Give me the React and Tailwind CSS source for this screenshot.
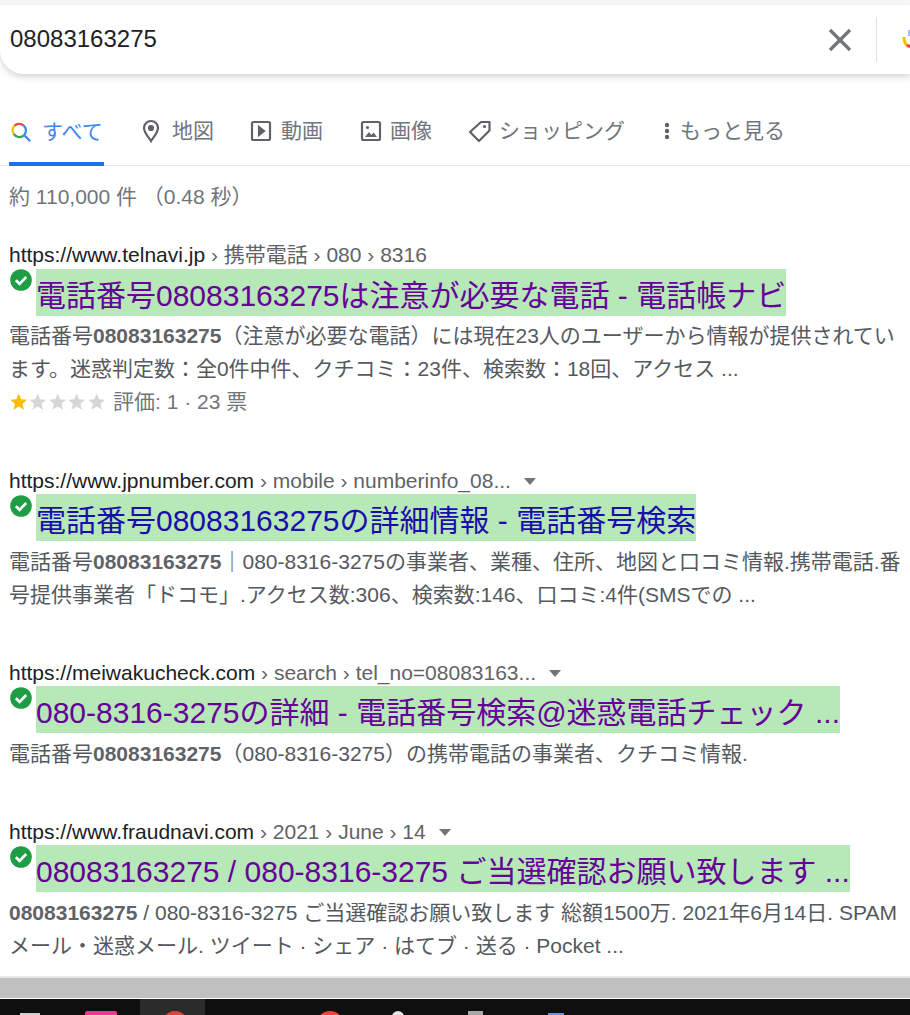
const JP = "font-['Liberation_Sans','Noto_Sans_CJK_JP',sans-serif]";

function Check() {
  return (
    <svg width="22" height="22" viewBox="0 0 22 22" className="shrink-0 mt-[2px] ml-[1px]">
      <circle cx="11" cy="11" r="10.800" fill="#1f9d45" />
      <path d="M5.800 11.200l3.800 3.600 6.600-6.800" fill="none" stroke="#fff" strokeWidth="2.600" />
    </svg>
  );
}

function Star({ color }) {
  return (
    <svg width="19.500" height="19" viewBox="0 0 24 24">
      <path d="M12 2l3 7.200 7.600.6-5.800 5 1.800 7.500L12 18.200 5.400 22.300l1.800-7.500-5.800-5L9 9.200z" fill={color} />
    </svg>
  );
}

function Result({ url, crumbs, caret, title, titleColor, titleTop = "mt-[1px]", wrapperClass, children }) {
  return (
    <div className={wrapperClass}>
      <div className="flex items-center h-[24px] text-[21px] leading-[24px] whitespace-nowrap">
        <span className="text-[#202124]">{url}</span>
        <span className="text-[#5f6368]">&nbsp;› {crumbs}</span>
        {caret && <span className="ml-[13px] mt-[1px] w-0 h-0 border-x-[6px] border-x-transparent border-t-[7px] border-t-[#70757a]" />}
      </div>
      <div className="flex items-start h-[47px]">
        <Check />
        <span className={`ml-[4px] h-[47px] bg-[#b7e8b7] text-[30px] leading-[54px] whitespace-nowrap ${titleTop} ${titleColor}`}>{title}</span>
      </div>
      <div className="text-[21px] leading-[33px] mt-[5px] text-[#55595e] whitespace-nowrap">{children}</div>
    </div>
  );
}

function Bold({ children }) {
  return <b className="font-bold text-[#5f6368]">{children}</b>;
}

export default function App() {
  const iconClass = "text-[#5f6368]";
  return (
    <div className={`w-[910px] h-[1015px] overflow-hidden bg-white flex flex-col ${JP}`}>
      <div className="h-[5px] bg-[#f7f7f7]" />
      <div className="h-[69px] bg-white rounded-bl-[24px] shadow-[0_3px_6px_rgba(60,64,67,0.22)] flex items-center relative z-10">
        <span className="ml-[10px] mb-[2px] text-[24px] text-[#202124]">08083163275</span>
        <svg width="24" height="24" viewBox="0 0 24 24" className="ml-auto mr-[24px]">
          <path d="M2 2l20 20M22 2L2 22" stroke="#70757a" strokeWidth="3.200" fill="none" />
        </svg>
        <div className="w-px h-[45px] bg-[#dfe1e5] mr-[25px]" />
        <svg width="8" height="24" viewBox="0 0 8 24">
          <path d="M2 9c0 5 2 9 6 9" fill="none" stroke="#fbbc04" strokeWidth="3" />
          <path d="M5 17.500c1 .5 2 .8 3 .8" fill="none" stroke="#ea4335" strokeWidth="3" />
          <path d="M7 2v6" stroke="#9ec5f8" strokeWidth="2" />
        </svg>
      </div>

      <div className="h-[91px] mt-[1px] pl-[9px] flex border-b border-[#e6e8ec] text-[21px] whitespace-nowrap">
        <div className="relative h-[91px] w-[95px] shrink-0 flex items-center text-[#4285f4] pt-[22px]">
          <svg width="22" height="24" viewBox="0 0 24 24" className="mr-[10px] ml-[1px] shrink-0">
            <path d="M15.500 15.500A7.500 7.500 0 0 1 4 14" fill="none" stroke="#34a853" strokeWidth="2.500" />
            <path d="M4 14A7.500 7.500 0 0 1 5 5" fill="none" stroke="#fbbc04" strokeWidth="2.500" />
            <path d="M5 5a7.500 7.500 0 0 1 10 0" fill="none" stroke="#ea4335" strokeWidth="2.500" />
            <path d="M15 5a7.500 7.500 0 0 1 .5 10.500L22 22" fill="none" stroke="#4285f4" strokeWidth="2.500" />
          </svg>
          <span>すべて</span>
          <div className="absolute left-0 right-0 bottom-0 h-[4px] bg-[#1a73e8]" />
        </div>
        <div className="flex items-center text-[#70757a] pt-[22px] ml-[36px] h-full">
          <svg width="24" height="24" viewBox="0 0 24 24" className={iconClass + " mr-[9px] ml-[-1px]"} fill="none" stroke="currentColor" strokeWidth="2.200">
            <path d="M12 22c-1-2-7-8-7-13a7 7 0 0 1 14 0c0 5-6 11-7 13z" />
            <circle cx="12" cy="9" r="2" fill="currentColor" />
          </svg>
          <span>地図</span>
        </div>
        <div className="flex items-center text-[#70757a] pt-[22px] ml-[35px] h-full">
          <svg width="24" height="24" viewBox="0 0 24 24" className={iconClass + " mr-[8px]"} fill="none" stroke="currentColor" strokeWidth="2.200">
            <rect x="3" y="3" width="18" height="18" rx="1.500" />
            <path d="M10 8l5 4-5 4z" fill="currentColor" />
          </svg>
          <span>動画</span>
        </div>
        <div className="flex items-center text-[#70757a] pt-[22px] ml-[36px] h-full">
          <svg width="24" height="24" viewBox="0 0 24 24" className={iconClass + " mr-[7px]"} fill="none" stroke="currentColor" strokeWidth="2.200">
            <rect x="3" y="3" width="18" height="18" rx="1.500" />
            <circle cx="8.500" cy="8.500" r="1.600" fill="currentColor" stroke="none" />
            <path d="M6 18l4-5 2.500 3 2-2.500L18 18z" fill="currentColor" stroke="none" />
          </svg>
          <span>画像</span>
        </div>
        <div className="flex items-center text-[#70757a] pt-[22px] ml-[36px] h-full">
          <svg width="24" height="24" viewBox="0 0 24 24" className={iconClass + " mr-[7px]"} fill="none" stroke="currentColor" strokeWidth="2.200">
            <path d="M2 13L13 3h8.500v8.500L11 22z" strokeLinejoin="round" />
            <circle cx="16.500" cy="7.500" r="1.600" fill="currentColor" stroke="none" />
          </svg>
          <span>ショッピング</span>
        </div>
        <div className="flex items-center text-[#70757a] pt-[22px] ml-[39px] h-full">
          <svg width="6" height="18" viewBox="0 0 6 18" className={iconClass + " mr-[10px]"}>
            <circle cx="3" cy="3" r="2.200" fill="currentColor" />
            <circle cx="3" cy="9" r="2.200" fill="currentColor" />
            <circle cx="3" cy="15" r="2.200" fill="currentColor" />
          </svg>
          <span>もっと見る</span>
        </div>
      </div>

      <div className="pl-[9px] flex-1 min-h-0">
        <div className="h-[24px] mt-[19px] text-[21px] leading-[24px] text-[#70757a] whitespace-nowrap">約 110,000 件 （0.48 秒）</div>

        <Result wrapperClass="mt-[34px]" titleTop="mt-[2px]" url="https://www.telnavi.jp" crumbs="携帯電話 › 080 › 8316" title="電話番号08083163275は注意が必要な電話 - 電話帳ナビ" titleColor="text-[#660099]">
          <div>電話番号<Bold>08083163275</Bold>（注意が必要な電話）には現在23人のユーザーから情報が提供されてい</div>
          <div>ます。迷惑判定数：全0件中件、クチコミ：23件、検索数：18回、アクセス ...</div>
          <div className="flex items-center text-[#70757a]">
            <span className="flex w-[97px]">
              <Star color="#fbbc04" /><Star color="#d6d6d6" /><Star color="#d6d6d6" /><Star color="#d6d6d6" /><Star color="#d6d6d6" />
            </span>
            <span className="ml-[7px]">評価: 1 · 23 票</span>
          </div>
        </Result>

        <Result wrapperClass="mt-[51px]" url="https://www.jpnumber.com" crumbs="mobile › numberinfo_08..." caret title="電話番号08083163275の詳細情報 - 電話番号検索" titleColor="text-[#1a0dab]">
          <div>電話番号<Bold>08083163275</Bold>｜080-8316-3275の事業者、業種、住所、地図と口コミ情報.携帯電話.番</div>
          <div>号提供事業者「ドコモ」.アクセス数:306、検索数:146、口コミ:4件(SMSでの ...</div>
        </Result>

        <Result wrapperClass="mt-[50px]" url="https://meiwakucheck.com" crumbs="search › tel_no=08083163..." caret title="080-8316-3275の詳細 - 電話番号検索@迷惑電話チェック ..." titleColor="text-[#660099]">
          <div>電話番号<Bold>08083163275</Bold>（080-8316-3275）の携帯電話の事業者、クチコミ情報.</div>
        </Result>

        <Result wrapperClass="mt-[50px]" url="https://www.fraudnavi.com" crumbs="2021 › June › 14" caret title="08083163275 / 080-8316-3275 ご当選確認お願い致します ..." titleColor="text-[#660099]">
          <div><Bold>08083163275</Bold> / 080-8316-3275 ご当選確認お願い致します 総額1500万. 2021年6月14日. SPAM</div>
          <div>メール・迷惑メール. ツイート · シェア · はてブ · 送る · Pocket ...</div>
        </Result>
      </div>

      <div className="h-[2px] bg-[#e8e8e8]" />
      <div className="h-[20px] bg-[#c0c0c0]" />
      <div className="h-px bg-white" />
      <div className="h-[16px] bg-[#0f0f0f] flex relative overflow-hidden">
        <div className="ml-[140px] w-[65px] bg-[#2b2b2b]" />
        <div className="absolute left-[85px] top-[12px] w-[32px] h-[8px] rounded-t-[2px] bg-[#e8388f]" />
        <div className="absolute left-[20px] top-[14px] w-[20px] h-[6px] bg-[#cfcfcf]" />
        <div className="absolute left-[162px] top-[12px] w-[26px] h-[26px] rounded-full bg-[#d94a36]" />
        <div className="absolute left-[316px] top-[12px] w-[28px] h-[28px] rounded-full bg-[#e8453c]" />
        <div className="absolute left-[392px] top-[12px] w-[12px] h-[10px] rounded-t-full bg-[#e6e6e6]" />
        <div className="absolute left-[468px] top-[12px] w-[15px] h-[8px] bg-[#a8a8a8]" />
        <div className="absolute left-[548px] top-[14px] w-[16px] h-[6px] bg-[#6f8fe0]" />
      </div>
    </div>
  );
}
